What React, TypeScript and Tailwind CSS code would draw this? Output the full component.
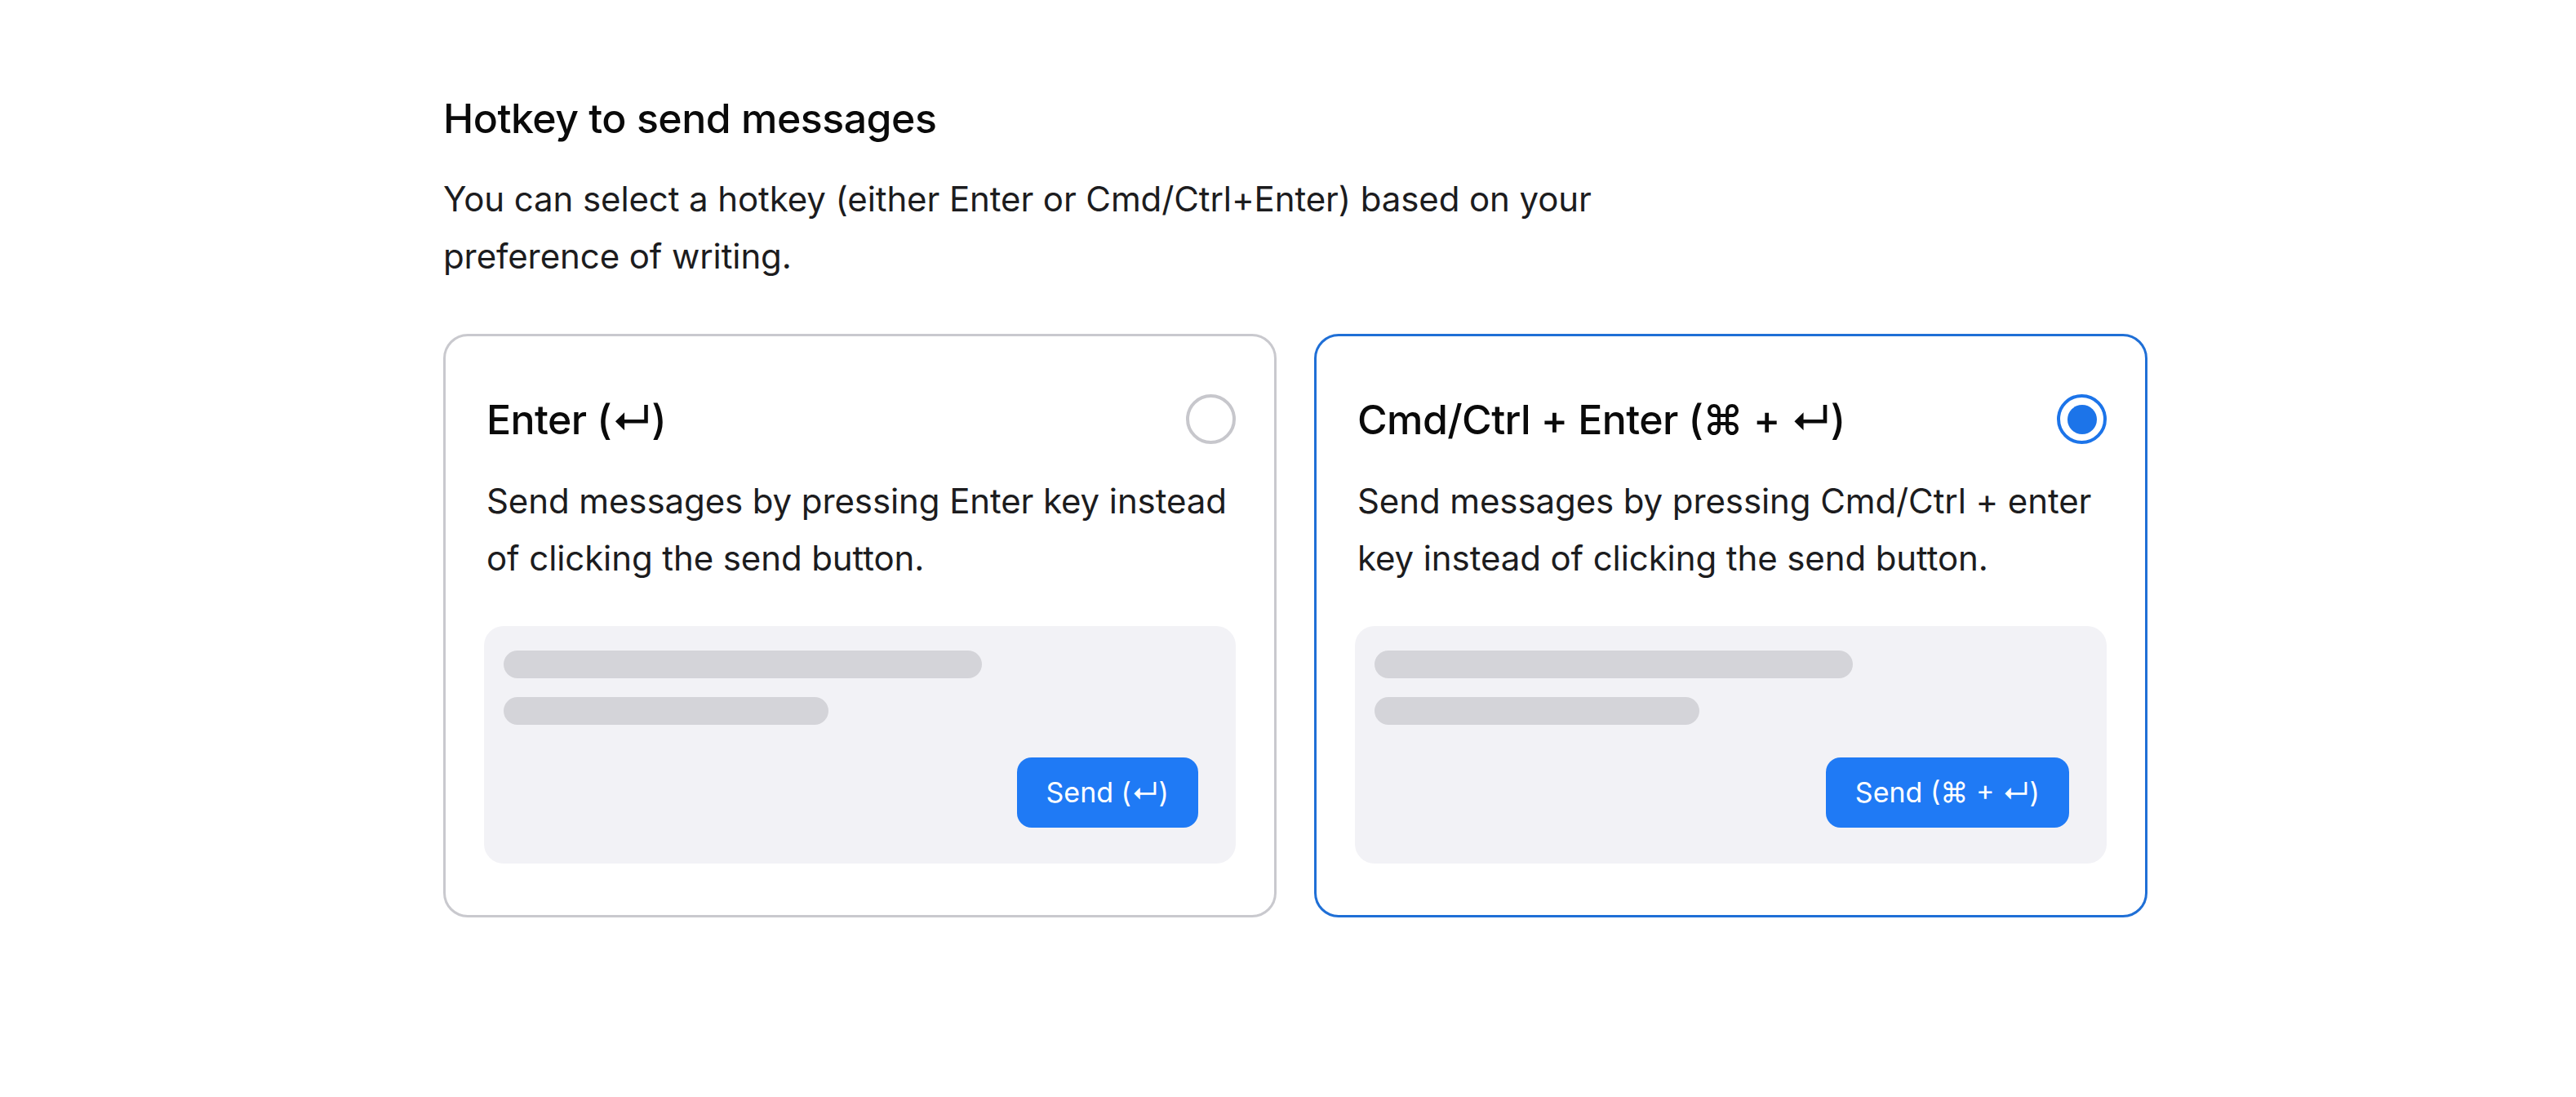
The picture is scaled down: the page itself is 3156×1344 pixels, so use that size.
import { useState } from "react";

const font = { fontFamily: "Inter, 'DejaVu Sans', sans-serif" };

const options = [
  {
    id: "enter",
    title: "Enter (↵)",
    description: "Send messages by pressing Enter key instead of clicking the send button.",
    button: "Send (↵)",
  },
  {
    id: "cmd",
    title: "Cmd/Ctrl + Enter (⌘ + ↵)",
    description: "Send messages by pressing Cmd/Ctrl + enter key instead of clicking the send button.",
    button: "Send (⌘ + ↵)",
  },
];

function Radio({ checked }: { checked: boolean }) {
  if (checked) {
    return (
      <span className="flex h-[61px] w-[61px] shrink-0 items-center justify-center rounded-full border-4 border-[#1c74e9]">
        <span className="h-[36px] w-[36px] rounded-full bg-[#1c74e9]" />
      </span>
    );
  }
  return <span className="h-[61px] w-[61px] shrink-0 rounded-full border-4 border-[#c7c7cc]" />;
}

export default function App() {
  const [selected, setSelected] = useState("cmd");

  return (
    <div className="min-h-[1344px] bg-white pt-[115px] text-[#0a0a0a]" style={font}>
      <div className="ml-[543px] w-[2088px]">
        <h2 className="text-[50px] font-medium leading-[60px] tracking-[-0.5px]">Hotkey to send messages</h2>
        <p className="mt-[34px] max-w-[1440px] text-[42px] leading-[70px] tracking-[-0.1px] text-[#1c1c1e]">
          You can select a hotkey (either Enter or Cmd/Ctrl+Enter) based on your preference of writing.
        </p>

        <div className="mt-[60px] grid grid-cols-2 gap-[46px]">
          {options.map((opt) => {
            const active = selected === opt.id;
            return (
              <div
                key={opt.id}
                onClick={() => setSelected(opt.id)}
                className={
                  active
                    ? "cursor-pointer rounded-[30px] border-[3px] border-[#1f6fd6] bg-white px-[47px] pb-[63px] pt-[71px]"
                    : "cursor-pointer rounded-[30px] border-[3px] border-[#c9c9ce] bg-white px-[47px] pb-[63px] pt-[71px]"
                }
              >
                <div className="flex items-center justify-between">
                  <h3 className="pl-[3px] text-[50px] font-medium leading-[60px] tracking-[-0.6px]">{opt.title}</h3>
                  <Radio checked={active} />
                </div>
                <p className="mt-[35px] pl-[3px] text-[42px] leading-[70px] tracking-[-0.1px] text-[#1c1c1e]">
                  {opt.description}
                </p>

                <div className="mt-[48px] rounded-[24px] bg-[#f2f2f6] pb-[44px] pl-[24px] pr-[46px] pt-[30px]">
                  <div className="h-[34px] w-[586px] rounded-full bg-[#d4d4d9]" />
                  <div className="mt-[23px] h-[34px] w-[398px] rounded-full bg-[#d4d4d9]" />
                  <div className="mt-[40px] flex justify-end">
                    <button className="h-[86px] rounded-[18px] bg-[#1f7af5] px-[36px] text-[34px] leading-[86px] text-white">
                      {opt.button}
                    </button>
                  </div>
                </div>
              </div>
            );
          })}
        </div>
      </div>
    </div>
  );
}
